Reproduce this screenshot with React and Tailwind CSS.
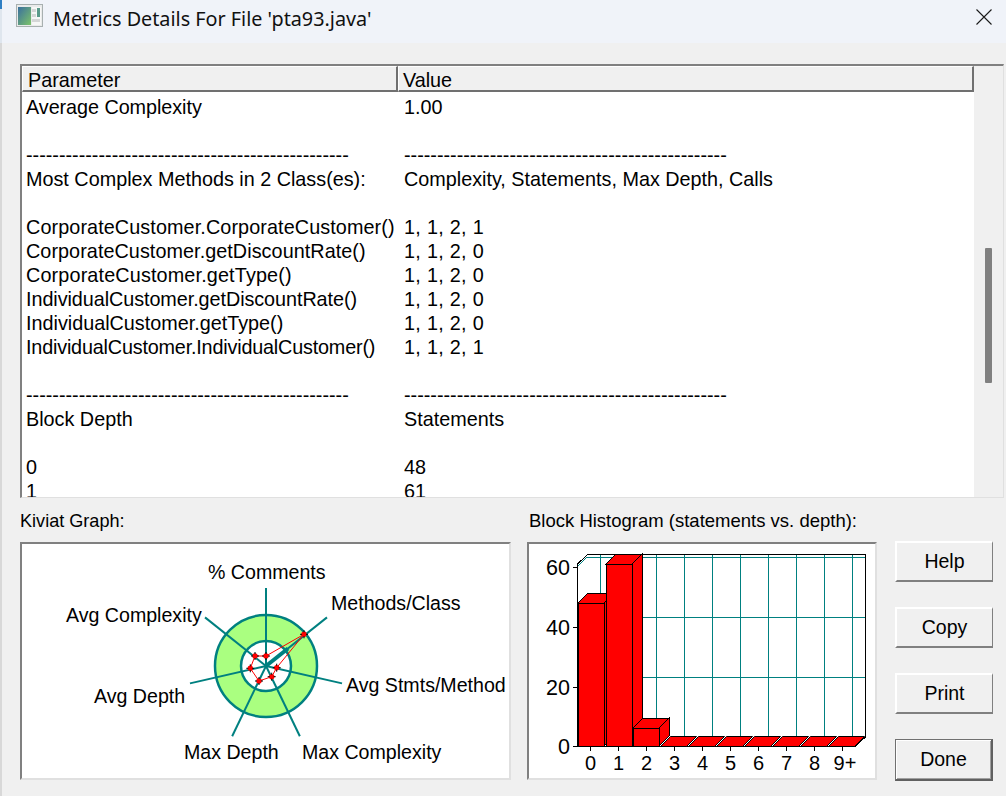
const FONT = "font-['Liberation_Sans',Arial,sans-serif]";
const DASH = "-------------------------------------------------";
const NUM = "tracking-[0.3px]";

const rows = [
  ["Average Complexity", "1.00", "tracking-[-0.05px]"],
  ["", ""],
  [DASH, DASH],
  ["Most Complex Methods in 2 Class(es):", "Complexity, Statements, Max Depth, Calls"],
  ["", ""],
  ["CorporateCustomer.CorporateCustomer()", "1, 1, 2, 1", "tracking-[0.1px]", NUM],
  ["CorporateCustomer.getDiscountRate()", "1, 1, 2, 0", "tracking-[0.06px]", NUM],
  ["CorporateCustomer.getType()", "1, 1, 2, 0", "tracking-[0.15px]", NUM],
  ["IndividualCustomer.getDiscountRate()", "1, 1, 2, 0", "tracking-[-0.06px]", NUM],
  ["IndividualCustomer.getType()", "1, 1, 2, 0", "", NUM],
  ["IndividualCustomer.IndividualCustomer()", "1, 1, 2, 1", "tracking-[-0.18px]", NUM],
  ["", ""],
  [DASH, DASH],
  ["Block Depth", "Statements"],
  ["", ""],
  ["0", "48"],
  ["1", "61"],
];

function Kiviat() {
  const ox = 22, oy = 544;
  const cx = 266 - ox, cy = 666 - oy;
  const spokes = [0, 1, 2, 3, 4, 5, 6].map((i) => {
    const a = (i * 2 * Math.PI) / 7;
    return [cx + 78 * Math.sin(a), cy - 78 * Math.cos(a)];
  });
  const pts = [[266, 656], [304, 634.3], [276.7, 667.7], [271.7, 676.7], [259, 681], [250.3, 668.3], [255, 656]].map(([x, y]) => [x - ox, y - oy]);
  const labels = [
    ["% Comments", 186, 35],
    ["Methods/Class", 309, 66],
    ["Avg Stmts/Method", 324, 148],
    ["Max Complexity", 280, 215],
    ["Max Depth", 162, 215],
    ["Avg Depth", 72, 159],
    ["Avg Complexity", 44, 78],
  ];
  return (
    <svg width="487" height="234" className="block overflow-hidden">
      <circle cx={cx} cy={cy} r="51" fill="#aaff80" stroke="#008080" strokeWidth="2.5" />
      <circle cx={cx} cy={cy} r="25" fill="#ffffff" stroke="#008080" strokeWidth="2.5" />
      {spokes.map(([x, y], i) => (
        <line key={i} x1={cx} y1={cy} x2={x} y2={y} stroke="#008080" strokeWidth="2" />
      ))}
      <line x1={cx} y1={cy} x2={cx + 22} y2={cy - 17.5} stroke="#008080" strokeWidth="4" />
      <polygon points={pts.map((p) => p.join(",")).join(" ")} fill="none" stroke="#ff0000" strokeWidth="1" />
      {pts.map(([x, y], i) => (
        <g key={i}>
          <circle cx={x} cy={y} r="2.7" fill="#ff0000" />
          <path d={`M${x - 4} ${y}h2M${x + 2} ${y}h2M${x} ${y - 4}v2M${x} ${y + 2}v2`} stroke="#000" strokeWidth="1" />
        </g>
      ))}
      {labels.map(([t, x, y]) => (
        <text key={t} x={x} y={y} fontSize="19.6" fill="#000" fontFamily="Liberation Sans, Arial, sans-serif">{t}</text>
      ))}
    </svg>
  );
}

function Histogram() {
  const ox = 529, oy = 544;
  const X = (x) => x - ox;
  const Y = (y) => y - oy;
  const vert = [600, 656, 684, 712, 740, 768, 796, 824, 852];
  const horiz = [557, 617, 677];
  const Bar = ({ x, w, top }) => {
    const d = 10, b = 746;
    return (
      <g stroke="#000" strokeWidth="1" fill="#ff0000">
        <polygon points={`${X(x + w)},${Y(top)} ${X(x + w + d)},${Y(top - d)} ${X(x + w + d)},${Y(b - d)} ${X(x + w)},${Y(b)}`} />
        <polygon points={`${X(x)},${Y(top)} ${X(x + d)},${Y(top - d)} ${X(x + w + d)},${Y(top - d)} ${X(x + w)},${Y(top)}`} />
        <rect x={X(x)} y={Y(top)} width={w} height={b - top} />
      </g>
    );
  };
  return (
    <svg width="347" height="234" className="block overflow-hidden" shapeRendering="crispEdges">
      {vert.map((x) => (
        <line key={x} x1={X(x) + 0.5} y1={Y(555)} x2={X(x) + 0.5} y2={Y(737)} stroke="#008080" />
      ))}
      {horiz.map((y) => (
        <line key={y} x1={X(587)} y1={Y(y) + 0.5} x2={X(865)} y2={Y(y) + 0.5} stroke="#008080" />
      ))}
      <line x1={X(577)} y1={Y(567)} x2={X(587)} y2={Y(557)} stroke="#008080" shapeRendering="auto" />
      <path d={`M${X(577.5)} ${Y(746)}V${Y(564)}L${X(587.5)} ${Y(554.5)}H${X(865.5)}V${Y(737)}L${X(855)} ${Y(746.5)}H${X(577)}`} fill="none" stroke="#000" />
      {[567, 627, 687, 746].map((y) => (
        <line key={y} x1={X(573)} y1={Y(y) + 0.5} x2={X(578)} y2={Y(y) + 0.5} stroke="#000" />
      ))}
      {[590, 618, 646, 674, 702, 730, 758, 786, 814, 842].map((x) => (
        <line key={x} x1={X(x) + 0.5} y1={Y(746)} x2={X(x) + 0.5} y2={Y(751)} stroke="#000" />
      ))}
      {[0, 1, 2, 3, 4, 5, 6].map((k) => {
        const x0 = 660.5 + 28 * k;
        return (
          <polygon key={k} shapeRendering="auto" points={`${X(x0)},${Y(746.5)} ${X(x0 + 10)},${Y(736.5)} ${X(x0 + 36)},${Y(736.5)} ${X(x0 + 26)},${Y(746.5)}`} fill="#ff0000" stroke="#000" />
        );
      })}
      <Bar x={578} w={26} top={603} />
      <Bar x={606} w={26} top={564} />
      <Bar x={633} w={26} top={728} />
      {[["60", 575], ["40", 635], ["20", 695], ["0", 754]].map(([t, y]) => (
        <text key={t} x={X(570)} y={Y(y)} textAnchor="end" fontSize="21.5" fontFamily="Liberation Sans, Arial, sans-serif">{t}</text>
      ))}
      {["0", "1", "2", "3", "4", "5", "6", "7", "8", "9+"].map((t, i) => (
        <text key={t} x={X((t === "9+" ? 593 : 590.5) + 28 * i)} y={Y(770)} textAnchor="middle" fontSize="20" fontFamily="Liberation Sans, Arial, sans-serif">{t}</text>
      ))}
    </svg>
  );
}

function Btn({ children, def }) {
  return (
    <button
      className={
        def
          ? "w-[98px] h-[42px] bg-[#f0f0f0] text-[19.5px] text-black border-t border-l border-r-2 border-b-2 border-t-[#707070] border-l-[#707070] border-r-[#606060] border-b-[#606060] shadow-[inset_1px_1px_0_#ffffff,inset_-1px_-1px_0_#a0a0a0]"
          : "w-[98px] h-[41px] pt-[1px] bg-[#f0f0f0] text-[19.5px] text-black border-t-2 border-l-2 border-r border-b-2 border-t-white border-l-white border-r-[#808080] border-b-[#808080]"
      }
    >
      {children}
    </button>
  );
}

export default function App() {
  return (
    <div className={`relative w-[1006px] h-[796px] overflow-hidden flex flex-col bg-[#f0f0f0] text-black text-[19.8px] ${FONT}`}>
      <div className="absolute left-0 top-0 w-[2px] h-[9px] bg-[#2f7fc4]" />
      <div className="h-[43px] shrink-0 flex items-start bg-[#f0f3f9] pl-[16px] pr-[14px] border-l-2 border-l-[#dfe6ee]">
        <svg width="27" height="23" viewBox="0 0 27 23" className="shrink-0 mt-[4px] -ml-[2px]">
          <defs>
            <linearGradient id="ic" x1="0" y1="0" x2="1" y2="1">
              <stop offset="0" stopColor="#3a6f9e" />
              <stop offset="1" stopColor="#7cc36a" />
            </linearGradient>
          </defs>
          <rect x="0.5" y="0.5" width="26" height="22" fill="#e9eaea" stroke="#a8b0b0" />
          <rect x="2" y="3" width="13" height="18" fill="url(#ic)" />
          <rect x="16" y="3" width="9" height="18" fill="#f6f7f6" />
          <rect x="21" y="4" width="3" height="9" fill="#5a9a8a" />
          <rect x="16" y="5" width="4" height="3" fill="#d4d6d6" />
          <rect x="16" y="10" width="4" height="3" fill="#d4d6d6" />
          <rect x="16" y="15" width="8" height="3" fill="#d4d6d6" />
        </svg>
        <span className="ml-[10px] h-[38px] leading-[38px] text-[19.8px] text-[#111] font-['Segoe_UI','Noto_Sans','Liberation_Sans',sans-serif]">Metrics Details For File 'pta93.java'</span>
        <svg width="16" height="16" viewBox="0 0 16 16" className="ml-auto mt-[9px]" fill="none" stroke="#1a1a1a" strokeWidth="1.1">
          <path d="M0.5 0.5 L15.5 15.5 M15.5 0.5 L0.5 15.5" />
        </svg>
      </div>

      <div className="flex-1 flex flex-col pl-[18px] border-l-2 border-l-[#d8d8d8]">
        <div className="mt-[21px] w-[984px] h-[434px] flex border-t-2 border-l-2 border-t-[#808080] border-l-[#808080] border-r border-b border-r-[#e0e0e0] border-b-[#e0e0e0] overflow-hidden">
          <div className="w-[952px] flex flex-col bg-white">
            <div className="flex h-[26px] shrink-0 bg-[#f0f0f0] leading-[27px]">
              <div className="w-[376px] pl-[5px] border-t border-l border-t-white border-l-white border-r-2 border-b-2 border-r-[#707070] border-b-[#707070]">Parameter</div>
              <div className="flex-1 pl-[4px] border-t border-l border-t-white border-l-white border-r-2 border-b-2 border-r-[#707070] border-b-[#707070]">Value</div>
            </div>
            <div className="pt-[3px]">
              {rows.map((r, i) => (
                <div key={i} className="flex h-[24px] leading-[24px] whitespace-pre">
                  <div className={`w-[382px] pl-[4px] ${r[2] || ""}`}>{r[0]}</div>
                  <div className={r[3] || ""}>{r[1]}</div>
                </div>
              ))}
            </div>
          </div>
          <div className="flex-1 bg-[#f0f0f0] pt-[182px] pl-[11px]">
            <div className="w-[7px] h-[135px] rounded-[1px] bg-[#808080]" />
          </div>
        </div>

        <div className="flex mt-[12px] h-[22px]">
          <div className="w-[509px] leading-[22px] text-[18.1px]">Kiviat Graph:</div>
          <div className="leading-[22px] text-[18.5px]">Block Histogram (statements vs. depth):</div>
        </div>

        <div className="flex mt-[10px]">
          <div className="w-[491px] h-[238px] bg-white border-t-2 border-l-2 border-t-[#808080] border-l-[#808080] border-r-2 border-b-2 border-r-[#e0e0e0] border-b-[#e0e0e0]">
            <Kiviat />
          </div>
          <div className="ml-[16px] w-[350px] h-[238px] bg-white border-t-2 border-l-2 border-t-[#808080] border-l-[#808080] border-r-2 border-b-2 border-r-[#e0e0e0] border-b-[#e0e0e0]">
            <Histogram />
          </div>
          <div className="ml-[18px] -mt-[1px] flex flex-col items-start gap-[25px]">
            <Btn>Help</Btn>
            <Btn>Copy</Btn>
            <Btn>Print</Btn>
            <Btn def>Done</Btn>
          </div>
        </div>
      </div>
    </div>
  );
}
